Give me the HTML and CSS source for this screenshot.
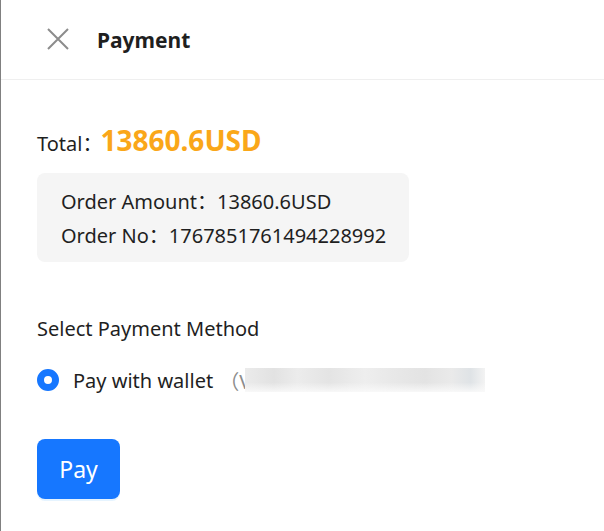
FILE: index.html
```html
<!DOCTYPE html>
<html lang="en">
<head>
    <meta charset="UTF-8">
    <meta name="viewport" content="width=device-width, initial-scale=1.0">
    <title>Payment</title>
    <link rel="stylesheet" href="styles.css">
</head>
<body>
    <div class="drawer">
        <header class="drawer-header">
            <button class="close-btn" aria-label="Close">
                <svg width="22" height="22" viewBox="0 0 22 22">
                    <path d="M1 1L21 21M21 1L1 21" stroke="#8c8c8c" stroke-width="2" fill="none"/>
                </svg>
            </button>
            <h1 class="drawer-title">Payment</h1>
        </header>
        <main class="drawer-body">
            <div class="total-row">
                <span class="total-label">Total：</span>
                <span class="total-amount">13860.6USD</span>
            </div>
            <div class="order-box">
                <div class="order-line">Order Amount：13860.6USD</div>
                <div class="order-line">Order No：1767851761494228992</div>
            </div>
            <div class="section-title">Select Payment Method</div>
            <label class="radio-row">
                <span class="radio-dot"></span>
                <span class="radio-text">Pay with wallet</span>
                <span class="radio-extra">（V</span>
                <span class="masked"></span>
            </label>
            <button class="pay-btn">Pay</button>
        </main>
    </div>
</body>
</html>
```

FILE: styles.css
```css
body {
    margin: 0;
    background: #fff;
    font-family: "Noto Sans", "Noto Sans CJK SC", sans-serif;
    color: #1f1f1f;
}
.drawer {
    height: 531px;
    border-left: 1px solid #808080;
    box-sizing: border-box;
}
.drawer-header {
    height: 79px;
    display: flex;
    align-items: center;
    padding-left: 46px;
    border-bottom: 1px solid #efefef;
}
.close-btn {
    background: none;
    border: none;
    padding: 0;
    width: 22px;
    height: 22px;
    margin-top: -2px;
    cursor: pointer;
}
.close-btn svg {
    display: block;
}
.drawer-title {
    margin: 0 0 0 28px;
    font-size: 21px;
    font-weight: 700;
    line-height: 28px;
}
.drawer-body {
    padding: 0 36px;
    display: flex;
    flex-direction: column;
    align-items: flex-start;
}
.total-row {
    margin-top: 40px;
    height: 40px;
    display: flex;
    align-items: center;
}
.total-label {
    font-size: 20px;
    margin-top: 4px;
}
.total-amount {
    font-size: 28px;
    font-weight: 700;
    color: #faa719;
    margin-left: -2px;
}
.order-box {
    margin-top: 13px;
    width: 372px;
    box-sizing: border-box;
    padding: 12px 20px 9px 24px;
    background: #f5f5f5;
    border-radius: 8px;
}
.order-line {
    font-size: 20px;
    line-height: 34px;
    white-space: nowrap;
}
.section-title {
    margin-top: 52px;
    font-size: 20px;
    line-height: 30px;
}
.radio-row {
    margin-top: 21px;
    height: 30px;
    display: flex;
    align-items: center;
    font-size: 20px;
}
.radio-dot {
    width: 22px;
    height: 22px;
    box-sizing: border-box;
    border-radius: 50%;
    border: 7px solid #1677ff;
    background: #fff;
    margin-right: 14px;
}
.radio-extra {
    color: #8c8c8c;
    margin-left: 6px;
}
.masked {
    width: 240px;
    height: 24px;
    margin-left: -6px;
    background:
        linear-gradient(180deg, rgba(255,255,255,0) 60%, rgba(250,250,250,0.9) 100%),
        linear-gradient(90deg, #ebebeb 0, #e2e2e2 12%, #ececec 22%, #e4e4e4 35%, #eeeeee 50%, #e8e8e8 62%, #e3e3e3 75%, #eaeaea 86%, #dfe3e6 94%, #f3f3f3 100%);
}
.pay-btn {
    margin-top: 44px;
    width: 83px;
    height: 60px;
    border: none;
    border-radius: 8px;
    background: #1677ff;
    color: #fff;
    font-family: inherit;
    font-size: 23px;
    box-shadow: 0 2px 0 rgba(5, 145, 255, 0.1);
    cursor: pointer;
}
```
